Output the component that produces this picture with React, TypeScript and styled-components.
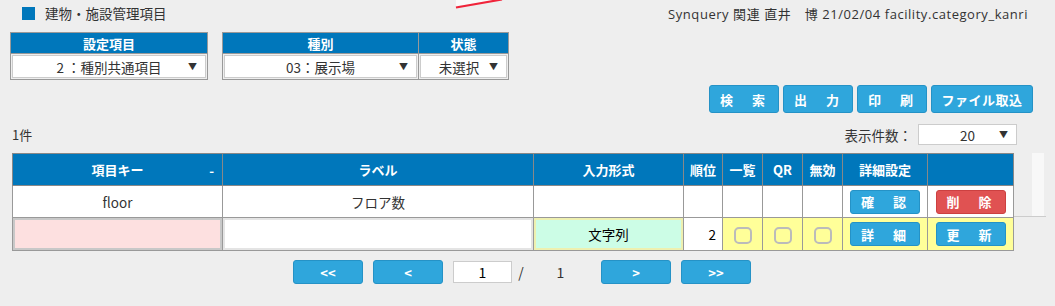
import React from 'react';
import styled, { createGlobalStyle } from 'styled-components';

const GlobalStyle = createGlobalStyle`
  body {
    margin: 0;
    background: #eeeeee;
    font-family: "Noto Sans CJK JP", "Noto Sans", sans-serif;
    font-size: 13px;
    color: #333;
  }
`;

const Page = styled.div`
  position: relative;
  width: 1055px;
  height: 306px;
  overflow: hidden;
`;

const TopBar = styled.div`
  display: flex;
  align-items: center;
  justify-content: space-between;
  height: 26px;
  padding: 0 27px 0 22px;
`;

const Title = styled.div`
  display: flex;
  align-items: center;
  gap: 10px;
  font-size: 13.5px;
`;

const Square = styled.span`
  width: 13px;
  height: 13px;
  background: #0077bb;
`;

const UserInfo = styled.div`
  font-family: "Open Sans", "Noto Sans CJK JP", sans-serif;
  font-size: 13px;
  letter-spacing: 0.55px;
  white-space: pre;
`;

const Scribble = styled.svg`
  position: absolute;
  left: 450px;
  top: 0;
`;

const Filters = styled.div`
  display: flex;
  gap: 14px;
  margin: 6px 0 0 10px;
`;

const FilterTable = styled.div<{ $cols: string }>`
  display: grid;
  grid-template-columns: ${p => p.$cols};
  grid-template-rows: 20px 25px;
  gap: 1px;
  border: 1px solid #999;
  background: #999;
`;

const FilterHead = styled.div`
  background: #0077bb;
  color: #fff;
  font-weight: bold;
  font-size: 13px;
  display: flex;
  align-items: center;
  justify-content: center;
`;

const FilterCell = styled.div`
  background: #eee;
  padding: 1px;
`;

const FakeSelect = styled.div<{ $h?: number; $w?: number }>`
  position: relative;
  box-sizing: border-box;
  height: ${p => (p.$h ? `${p.$h}px` : '100%')};
  width: ${p => (p.$w ? `${p.$w}px` : 'auto')};
  background: #fff;
  border: 1px solid #ccc;
  display: flex;
  align-items: center;
  justify-content: center;
  font-size: 13.5px;
  color: #333;
`;

const Arrow = styled.span`
  position: absolute;
  right: 8px;
  font-size: 9px;
  color: #333;
`;

const Actions = styled.div`
  display: flex;
  justify-content: flex-end;
  gap: 4px;
  margin-top: 5px;
  padding-right: 22px;
`;

const Btn = styled.button<{ $w?: number; $h?: number; $red?: boolean; $tight?: boolean }>`
  width: ${p => p.$w ?? 70}px;
  height: ${p => p.$h ?? 28}px;
  padding: 0;
  background: ${p => (p.$red ? '#e05252' : '#2fa6dc')};
  border: 1px solid ${p => (p.$red ? '#cc4040' : '#2592c6')};
  border-radius: 3px;
  color: #fff;
  font-family: inherit;
  font-size: 13px;
  font-weight: bold;
  letter-spacing: ${p => (p.$tight ? '0' : p.$w && p.$w > 90 ? '0.5px' : '3px')};
  display: flex;
  align-items: center;
  justify-content: center;
`;

const CountRow = styled.div`
  display: flex;
  align-items: center;
  justify-content: space-between;
  height: 21px;
  margin-top: 11px;
  padding: 0 38px 0 12px;
`;

const PerPage = styled.div`
  display: flex;
  align-items: center;
  gap: 6px;
  font-size: 13.5px;
`;

const TableArea = styled.div`
  display: flex;
  margin: 8px 0 0 12px;
`;

const Grid = styled.table`
  border-collapse: collapse;
  table-layout: fixed;
  width: 1001px;
`;

const Th = styled.th`
  height: 31px;
  padding: 0;
  background: #0077bb;
  color: #fff;
  font-weight: bold;
  font-size: 13px;
  border: 1px solid #888;
  position: relative;
`;

const SortMark = styled.span`
  position: absolute;
  right: 8px;
  top: 7px;
`;

const Td = styled.td<{ $yellow?: boolean }>`
  height: 31px;
  padding: 0;
  text-align: center;
  font-size: 13.5px;
  border: 1px solid #999;
  background: ${p => (p.$yellow ? '#ffff99' : '#fff')};
`;

const CellBox = styled.div<{ $bg: string; $border: string; $align?: string }>`
  box-sizing: border-box;
  height: 32px;
  background: ${p => p.$bg};
  border: 2px solid ${p => p.$border};
  display: flex;
  align-items: center;
  justify-content: ${p => p.$align ?? 'center'};
  padding: 0 4px;
  font-size: 13.5px;
  color: #000;
`;

const Check = styled.span`
  display: inline-block;
  width: 14px;
  height: 13px;
  border: 2px solid #bbb;
  border-radius: 5px;
  vertical-align: middle;
`;

const BtnCell = styled.div`
  display: flex;
  justify-content: center;
`;

const Gutter = styled.div`
  width: 32px;
  height: 64px;
  border-bottom: 1px solid #ccc;
  display: flex;
  justify-content: flex-end;
  padding-right: 2px;
  box-sizing: border-box;
`;

const Track = styled.div`
  width: 12px;
  background: #f8f8f8;
`;

const Pager = styled.div`
  display: flex;
  align-items: center;
  gap: 10px;
  margin-top: 9px;
  padding-left: 293px;
`;

const PageInfo = styled.div`
  display: flex;
  align-items: center;
  width: 138px;
  font-size: 14px;
`;

const PageInput = styled.div`
  box-sizing: border-box;
  width: 59px;
  height: 22px;
  background: #fff;
  border: 1px solid #ccc;
  display: flex;
  align-items: center;
  justify-content: center;
  color: #000;
`;

const PageText = styled.span<{ $w: number }>`
  width: ${p => p.$w}px;
  text-align: center;
`;

const columns = [
  { label: '項目キー', w: 210 },
  { label: 'ラベル', w: 311 },
  { label: '入力形式', w: 150 },
  { label: '順位', w: 39 },
  { label: '一覧', w: 40 },
  { label: 'QR', w: 40 },
  { label: '無効', w: 40 },
  { label: '詳細設定', w: 85 },
  { label: '', w: 86 },
];

export default function App() {
  return (
    <Page>
      <GlobalStyle />
      <Scribble width="60" height="12" viewBox="0 0 60 12">
        <polygon points="6,0 50,0 6,6" fill="#fafafa" />
        <line x1="6" y1="7.5" x2="52" y2="-0.5" stroke="#f0243a" strokeWidth="2.2" />
      </Scribble>

      <TopBar>
        <Title>
          <Square />
          建物・施設管理項目
        </Title>
        <UserInfo>Synquery 関連 直井　博 21/02/04 facility.category_kanri</UserInfo>
      </TopBar>

      <Filters>
        <FilterTable $cols="196px">
          <FilterHead>設定項目</FilterHead>
          <FilterCell>
            <FakeSelect>
              2 ：種別共通項目<Arrow>▼</Arrow>
            </FakeSelect>
          </FilterCell>
        </FilterTable>
        <FilterTable $cols="195px 89px">
          <FilterHead>種別</FilterHead>
          <FilterHead>状態</FilterHead>
          <FilterCell>
            <FakeSelect>
              03：展示場<Arrow>▼</Arrow>
            </FakeSelect>
          </FilterCell>
          <FilterCell>
            <FakeSelect>
              未選択&nbsp;&nbsp;&nbsp;<Arrow>▼</Arrow>
            </FakeSelect>
          </FilterCell>
        </FilterTable>
      </Filters>

      <Actions>
        <Btn>検　索</Btn>
        <Btn>出　力</Btn>
        <Btn>印　刷</Btn>
        <Btn $w={102}>ファイル取込</Btn>
      </Actions>

      <CountRow>
        <span>1件</span>
        <PerPage>
          表示件数：
          <FakeSelect $w={99} $h={21}>
            20<Arrow>▼</Arrow>
          </FakeSelect>
        </PerPage>
      </CountRow>

      <TableArea>
        <Grid>
          <colgroup>
            {columns.map((c, i) => (
              <col key={i} style={{ width: c.w }} />
            ))}
          </colgroup>
          <thead>
            <tr>
              {columns.map((c, i) => (
                <Th key={i}>
                  {c.label}
                  {i === 0 && <SortMark>-</SortMark>}
                </Th>
              ))}
            </tr>
          </thead>
          <tbody>
            <tr>
              <Td>floor</Td>
              <Td>フロア数</Td>
              <Td />
              <Td />
              <Td />
              <Td />
              <Td />
              <Td>
                <BtnCell>
                  <Btn $h={24}>確　認</Btn>
                </BtnCell>
              </Td>
              <Td>
                <BtnCell>
                  <Btn $h={24} $red>削　除</Btn>
                </BtnCell>
              </Td>
            </tr>
            <tr>
              <Td>
                <CellBox $bg="#fde0e0" $border="#c8c8c8" />
              </Td>
              <Td>
                <CellBox $bg="#fff" $border="#e4e4e4" />
              </Td>
              <Td>
                <CellBox $bg="#ccfde6" $border="#eef0b0">
                  文字列
                </CellBox>
              </Td>
              <Td>
                <CellBox $bg="#fff" $border="#fff" $align="flex-end">
                  2
                </CellBox>
              </Td>
              <Td $yellow>
                <Check />
              </Td>
              <Td $yellow>
                <Check />
              </Td>
              <Td $yellow>
                <Check />
              </Td>
              <Td $yellow>
                <BtnCell>
                  <Btn $h={24}>詳　細</Btn>
                </BtnCell>
              </Td>
              <Td $yellow>
                <BtnCell>
                  <Btn $h={24}>更　新</Btn>
                </BtnCell>
              </Td>
            </tr>
          </tbody>
        </Grid>
        <Gutter>
          <Track />
        </Gutter>
      </TableArea>

      <Pager>
        <Btn $h={24} $tight>{'<<'}</Btn>
        <Btn $h={24} $tight>{'<'}</Btn>
        <PageInfo>
          <PageInput>1</PageInput>
          <PageText $w={18}>/</PageText>
          <PageText $w={61}>1</PageText>
        </PageInfo>
        <Btn $h={24} $tight>{'>'}</Btn>
        <Btn $h={24} $tight>{'>>'}</Btn>
      </Pager>
    </Page>
  );
}
